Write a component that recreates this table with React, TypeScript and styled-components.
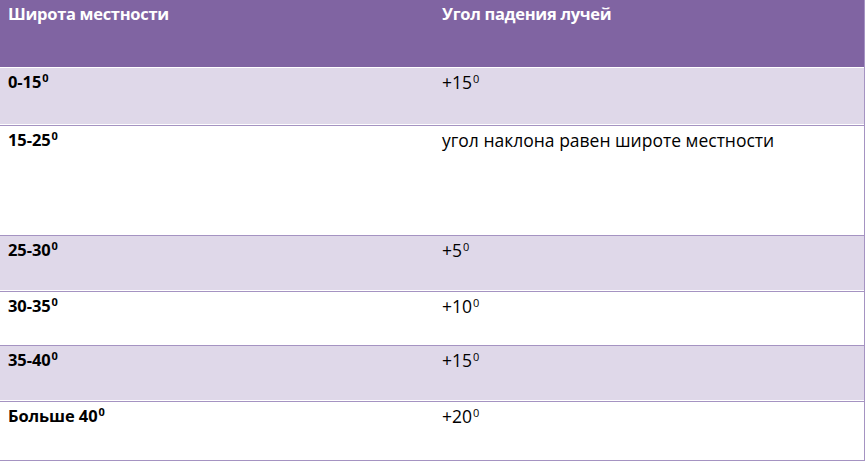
import React from "react";
import styled, { createGlobalStyle } from "styled-components";

const Global = createGlobalStyle`
  html, body { margin: 0; padding: 0; background: #ffffff; }
  body { font-family: "Open Sans", "Liberation Sans", sans-serif; }
`;

const Table = styled.div`
  width: 865px;
  box-sizing: border-box;
  border-right: 1px solid #a593c2;
  display: flex;
  flex-direction: column;
`;

const Row = styled.div<{ $h: number; $band?: boolean; $head?: boolean }>`
  display: grid;
  grid-template-columns: 434px 1fr;
  height: ${(p) => p.$h}px;
  box-sizing: border-box;
  background: ${(p) => (p.$head ? "#8064a2" : p.$band ? "#dfd8e9" : "#ffffff")};
  border-bottom: 1px solid ${(p) => (p.$head ? "#ffffff" : "#a593c2")};
  box-shadow: ${(p) => (p.$band ? "inset 0 -1px 0 #ffffff" : "none")};
`;

const Cell = styled.div<{ $bold?: boolean; $head?: boolean }>`
  padding: 3px 8px 0 8px;
  font-size: ${(p) => (p.$bold || p.$head ? "16.5px" : "17.5px")};
  line-height: 22px;
  font-weight: ${(p) => (p.$bold || p.$head ? 700 : 400)};
  color: ${(p) => (p.$head ? "#ffffff" : "#000000")};
  letter-spacing: ${(p) => (p.$head ? "-0.3px" : p.$bold ? "-0.1px" : "0px")};
  white-space: nowrap;
`;

const Sup = styled.sup`
  font-size: 11px;
  line-height: 0;
  vertical-align: 6px;
  margin-left: 1px;
`;

type R = { a: string; b: string; deg: boolean; h: number };

const rows: R[] = [
  { a: "0-15", b: "+15", deg: true, h: 58 },
  { a: "15-25", b: "угол наклона равен широте местности", deg: false, h: 110 },
  { a: "25-30", b: "+5", deg: true, h: 56 },
  { a: "30-35", b: "+10", deg: true, h: 54 },
  { a: "35-40", b: "+15", deg: true, h: 56 },
  { a: "Больше 40", b: "+20", deg: true, h: 59 },
];

export default function App() {
  return (
    <>
      <Global />
      <Table>
        <Row $h={68} $head>
          <Cell $head>Широта местности</Cell>
          <Cell $head>Угол падения лучей</Cell>
        </Row>
        {rows.map((r, i) => (
          <Row key={i} $h={r.h} $band={i % 2 === 0}>
            <Cell $bold>
              {r.a}
              <Sup>0</Sup>
            </Cell>
            <Cell>
              {r.b}
              {r.deg && <Sup>0</Sup>}
            </Cell>
          </Row>
        ))}
      </Table>
    </>
  );
}
